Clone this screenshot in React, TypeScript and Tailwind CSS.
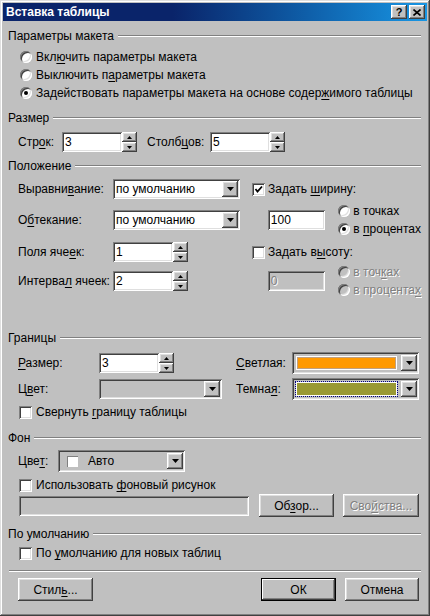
import React from "react";

const raised =
  "shadow-[inset_-1px_-1px_#404040,inset_1px_1px_#ffffff,inset_-2px_-2px_#808080,inset_2px_2px_#dfdfdf]";
const sunken =
  "shadow-[inset_1px_1px_#808080,inset_-1px_-1px_#ffffff,inset_2px_2px_#404040,inset_-2px_-2px_#dfdfdf]";
const dim = "text-[#808080] [text-shadow:1px_1px_0_#ffffff]";

function U({ children }: { children: React.ReactNode }) {
  return <span className="underline underline-offset-2">{children}</span>;
}

function Header({ title }: { title: string }) {
  return (
    <div className="flex items-center h-[14px]">
      <span className="whitespace-nowrap">{title}</span>
      <div className="ml-[4px] flex-1 h-[2px] border-t border-t-[#808080] border-b border-b-white" />
    </div>
  );
}

function Radio({ checked = false, disabled = false }: { checked?: boolean; disabled?: boolean }) {
  return (
    <span
      className={`shrink-0 w-[12px] h-[12px] rounded-full flex items-center justify-center ${sunken} ${
        disabled ? "bg-[#c0c0c0]" : "bg-white"
      }`}
    >
      {checked && <span className="w-[4px] h-[4px] rounded-full bg-black" />}
    </span>
  );
}

function Check({ checked = false }: { checked?: boolean }) {
  return (
    <span className={`shrink-0 w-[13px] h-[13px] bg-white flex items-center justify-center ${sunken}`}>
      {checked && (
        <svg width="9" height="9" viewBox="0 0 9 9">
          <polyline points="1.5,4 3.5,6.5 8,1.5" fill="none" stroke="#000" strokeWidth="1.8" />
        </svg>
      )}
    </span>
  );
}

function Field({ value, w, disabled = false }: { value: string; w: string; disabled?: boolean }) {
  return (
    <div
      className={`h-[20px] pl-[3px] flex items-center ${w} ${sunken} ${
        disabled ? "bg-[#c0c0c0] " + dim : "bg-white"
      }`}
    >
      {value}
    </div>
  );
}

function Spin() {
  return (
    <div className="w-[15px] h-[20px] flex flex-col">
      <div className={`h-[10px] bg-[#c0c0c0] flex items-center justify-center ${raised}`}>
        <svg width="5" height="3" viewBox="0 0 5 3">
          <polygon points="2.5,0 5,3 0,3" fill="#000" />
        </svg>
      </div>
      <div className={`h-[10px] bg-[#c0c0c0] flex items-center justify-center ${raised}`}>
        <svg width="5" height="3" viewBox="0 0 5 3">
          <polygon points="0,0 5,0 2.5,3" fill="#000" />
        </svg>
      </div>
    </div>
  );
}

function DropBtn() {
  return (
    <div className={`shrink-0 w-[16px] h-[16px] mr-[2px] bg-[#c0c0c0] flex items-center justify-center ${raised}`}>
      <svg width="7" height="4" viewBox="0 0 7 4">
        <polygon points="0,0 7,0 3.5,4" fill="#000" />
      </svg>
    </div>
  );
}

function Combo({ value, w, disabled = false }: { value: string; w: string; disabled?: boolean }) {
  return (
    <div className={`h-[20px] pl-[3px] flex items-center ${w} ${sunken} ${disabled ? "bg-[#c0c0c0]" : "bg-white"}`}>
      <span className="flex-1">{value}</span>
      <DropBtn />
    </div>
  );
}

function Btn({
  children,
  w,
  primary = false,
}: {
  children: React.ReactNode;
  w: string;
  primary?: boolean;
}) {
  return (
    <div
      className={`h-[23px] flex items-center justify-center bg-[#c0c0c0] ${w} ${
        primary
          ? "border border-black shadow-[inset_-1px_-1px_#404040,inset_1px_1px_#ffffff,inset_-2px_-2px_#808080]"
          : raised
      }`}
    >
      {children}
    </div>
  );
}

export default function App() {
  return (
    <div
      className={`w-[430px] h-[616px] p-[3px] bg-[#c0c0c0] text-black text-[12px] leading-none whitespace-nowrap font-['Liberation_Sans',Arial,sans-serif] shadow-[inset_-1px_-1px_#404040,inset_1px_1px_#dfdfdf,inset_-2px_-2px_#808080,inset_2px_2px_#ffffff] overflow-hidden`}
    >
      {/* title bar */}
      <div className="h-[18px] pl-[3px] pr-[2px] flex items-center bg-linear-to-r from-[#0a246a] from-40% to-[#1896e4]">
        <span className="flex-1 text-white font-bold text-[12px]">Вставка таблицы</span>
        <div className={`w-[16px] h-[14px] bg-[#c0c0c0] flex items-center justify-center font-bold text-[11px] ${raised}`}>
          ?
        </div>
        <div className={`ml-[2px] w-[16px] h-[14px] bg-[#c0c0c0] flex items-center justify-center ${raised}`}>
          <svg width="8" height="7" viewBox="0 0 8 7">
            <path d="M0.5 0.5 L7.5 6.5 M7.5 0.5 L0.5 6.5" stroke="#000" strokeWidth="1.6" />
          </svg>
        </div>
      </div>

      <div className="pl-[5px] pr-[6px]">
        {/* Параметры макета */}
        <div className="mt-[8px]">
          <Header title="Параметры макета" />
        </div>
        <div className="mt-[5px] pl-[12px]">
          <div className="h-[18px] flex items-center gap-[4px]">
            <Radio />
            <span>
              Вкл<U>ю</U>чить параметры макета
            </span>
          </div>
          <div className="h-[18px] flex items-center gap-[4px]">
            <Radio />
            <span>
              Выключить п<U>а</U>раметры макета
            </span>
          </div>
          <div className="h-[18px] flex items-center gap-[4px]">
            <Radio checked />
            <span>
              Задействовать параметры макета на основе содер<U>ж</U>имого таблицы
            </span>
          </div>
        </div>

        {/* Размер */}
        <div className="mt-[9px]">
          <Header title="Размер" />
        </div>
        <div className="mt-[7px] h-[20px] pl-[10px] flex items-center">
          <span className="w-[44px]">
            Стр<U>о</U>к:
          </span>
          <Field value="3" w="w-[60px]" />
          <Spin />
          <span className="ml-[10px] w-[63px]">
            Столб<U>ц</U>ов:
          </span>
          <Field value="5" w="w-[60px]" />
          <Spin />
        </div>

        {/* Положение */}
        <div className="mt-[7px]">
          <Header title="Положение" />
        </div>
        <div className="mt-[6px] h-[20px] pl-[10px] flex items-center">
          <div className="w-[234px] flex items-center">
            <span className="w-[95px]">
              Выравни<U>в</U>ание:
            </span>
            <Combo value="по умолчанию" w="w-[127px]" />
          </div>
          <div className="flex items-center gap-[3px]">
            <Check checked />
            <span>
              Задать <U>ш</U>ирину:
            </span>
          </div>
        </div>
        <div className="mt-[11px] h-[20px] pl-[10px] flex items-center">
          <div className="w-[234px] flex items-center">
            <span className="w-[95px]">
              О<U>б</U>текание:
            </span>
            <Combo value="по умолчанию" w="w-[127px]" />
          </div>
          <Field value="100" w="w-[58px] ml-[18px]" />
          <div className="ml-[13px] flex flex-col gap-[6px]">
            <div className="h-[12px] flex items-center gap-[3px]">
              <Radio />
              <span>в точках</span>
            </div>
            <div className="h-[12px] flex items-center gap-[3px]">
              <Radio checked />
              <span>
                в <U>п</U>роцентах
              </span>
            </div>
          </div>
        </div>
        <div className="mt-[12px] h-[20px] pl-[10px] flex items-center">
          <div className="w-[234px] flex items-center">
            <span className="w-[95px]">
              Поля яче<U>е</U>к:
            </span>
            <Field value="1" w="w-[60px]" />
            <Spin />
          </div>
          <div className="flex items-center gap-[3px]">
            <Check />
            <span>
              Задать в<U>ы</U>соту:
            </span>
          </div>
        </div>
        <div className="mt-[9px] h-[20px] pl-[10px] flex items-center">
          <div className="w-[234px] flex items-center">
            <span className="w-[95px]">
              Интерва<U>л</U> ячеек:
            </span>
            <Field value="2" w="w-[60px]" />
            <Spin />
          </div>
          <Field value="0" w="w-[58px] ml-[18px]" disabled />
          <div className={`ml-[13px] flex flex-col gap-[6px] ${dim}`}>
            <div className="h-[12px] flex items-center gap-[3px]">
              <Radio disabled />
              <span>
                в точ<U>к</U>ах
              </span>
            </div>
            <div className="h-[12px] flex items-center gap-[3px]">
              <Radio disabled />
              <span>
                в процента<U>х</U>
              </span>
            </div>
          </div>
        </div>

        {/* Границы */}
        <div className="mt-[40px]">
          <Header title="Границы" />
        </div>
        <div className="mt-[7px] h-[22px] pl-[10px] flex items-center">
          <div className="w-[218px] flex items-center">
            <span className="w-[81px]">
              <U>Р</U>азмер:
            </span>
            <Field value="3" w="w-[60px]" />
            <Spin />
          </div>
          <span className="w-[56px]">
            <U>С</U>ветлая:
          </span>
          <div className={`w-[127px] h-[22px] flex items-center bg-[#c0c0c0] ${sunken}`}>
            <div className="flex-1 h-full p-[4px]">
              <div className="h-full border border-white">
                <div className="h-full bg-[#ff9900] border border-[#c0a080]" />
              </div>
            </div>
            <DropBtn />
          </div>
        </div>
        <div className="mt-[4px] h-[22px] pl-[10px] flex items-center">
          <div className="w-[218px] flex items-center">
            <span className="w-[81px]">
              Ц<U>в</U>ет:
            </span>
            <Combo value="" w="w-[123px]" disabled />
          </div>
          <span className="w-[56px]">
            Темна<U>я</U>:
          </span>
          <div className={`w-[127px] h-[22px] flex items-center bg-[#c0c0c0] ${sunken}`}>
            <div className="flex-1 h-full p-[3px]">
              <div className="h-full border border-dotted border-[#000080]">
                <div className="h-full border border-white">
                  <div className="h-full bg-[#999933]" />
                </div>
              </div>
            </div>
            <DropBtn />
          </div>
        </div>
        <div className="mt-[4px] h-[16px] pl-[11px] flex items-center gap-[4px]">
          <Check />
          <span>
            Свернуть <U>г</U>раницу таблицы
          </span>
        </div>

        {/* Фон */}
        <div className="mt-[11px]">
          <Header title="Фон" />
        </div>
        <div className="mt-[5px] h-[22px] pl-[10px] flex items-center">
          <span className="w-[40px]">
            Цве<U>т</U>:
          </span>
          <div className={`w-[127px] h-[22px] pl-[9px] flex items-center bg-[#c0c0c0] ${sunken}`}>
            <span className="w-[11px] h-[11px] bg-white border-t border-l border-[#808080]" />
            <span className="ml-[10px] flex-1">Авто</span>
            <DropBtn />
          </div>
        </div>
        <div className="mt-[5px] h-[16px] pl-[11px] flex items-center gap-[4px]">
          <Check />
          <span>
            Использовать <U>ф</U>оновый рисунок
          </span>
        </div>
        <div className="mt-[2px] h-[21px] pl-[11px] flex items-center">
          <div className={`w-[230px] h-[20px] bg-[#c0c0c0] ${sunken}`} />
          <Btn w="w-[75px] ml-[10px]">
            <span>
              Об<U>з</U>ор...
            </span>
          </Btn>
          <Btn w="w-[76px] ml-[9px]">
            <span className={dim}>
              Сво<U>й</U>ства...
            </span>
          </Btn>
        </div>

        {/* По умолчанию */}
        <div className="mt-[11px]">
          <Header title="По умолчанию" />
        </div>
        <div className="mt-[4px] h-[16px] pl-[11px] flex items-center gap-[4px]">
          <Check />
          <span>
            По <U>у</U>молчанию для новых таблиц
          </span>
        </div>

        <div className="mt-[9px] ml-[1px] h-[2px] border-t border-t-[#808080] border-b border-b-white" />

        <div className="mt-[6px] pl-[10px] pr-[2px] flex items-center">
          <Btn w="w-[75px]">
            <span>
              Стил<U>ь</U>...
            </span>
          </Btn>
          <div className="flex-1" />
          <Btn w="w-[75px]" primary>
            ОК
          </Btn>
          <Btn w="w-[74px] ml-[9px]">Отмена</Btn>
        </div>
      </div>
    </div>
  );
}
